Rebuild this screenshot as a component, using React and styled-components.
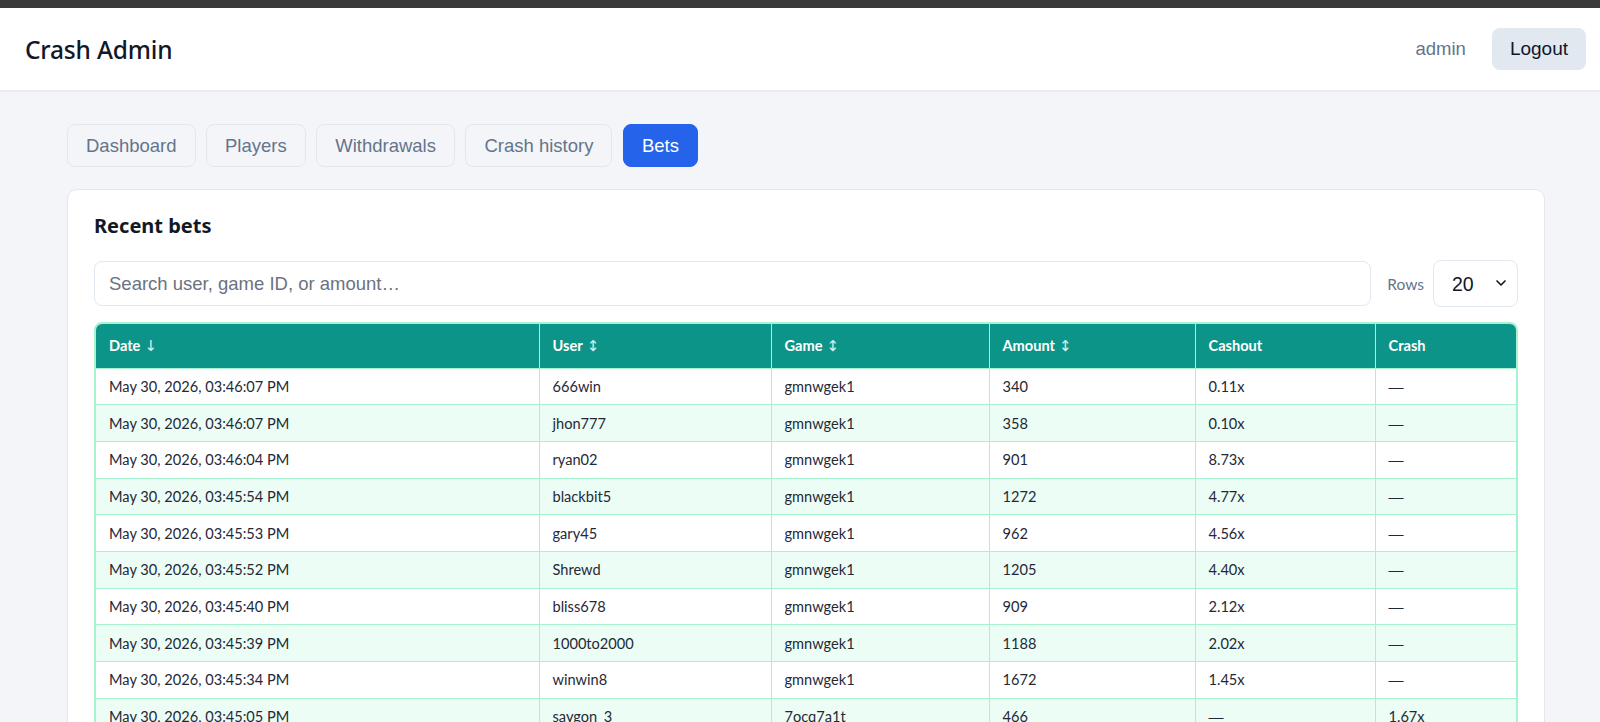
import React from 'react';
import styled, { createGlobalStyle } from 'styled-components';
import { ChevronDown } from 'lucide-react';

const GlobalStyle = createGlobalStyle`
  html, body {
    margin: 0;
    padding: 0;
    background: #f4f5f9;
    font-family: "Lato", "Liberation Sans", sans-serif;
    color: #0f172a;
  }
  * { box-sizing: border-box; }
`;

const TopStrip = styled.div`
  height: 8px;
  background: #3a3a3a;
`;

const Header = styled.header`
  height: 84px;
  background: #fff;
  display: flex;
  align-items: center;
  justify-content: space-between;
  padding: 0 14px 0 25px;
  border-bottom: 2px solid #e8ebf1;
`;

const Brand = styled.h1`
  margin: 0;
  font-family: "Noto Sans", "Open Sans", sans-serif;
  font-size: 24.5px;
  font-weight: 500;
  color: #111827;
  letter-spacing: -0.2px;
`;

const UserBox = styled.div`
  display: flex;
  align-items: center;
  gap: 26px;
`;

const UserName = styled.span`
  font-family: "Liberation Sans", Arial, sans-serif;
  font-size: 18.5px;
  color: #64748b;
`;

const LogoutButton = styled.button`
  height: 42px;
  padding: 0 18px;
  border: none;
  border-radius: 8px;
  background: #e2e8f0;
  color: #0f172a;
  font-family: "Liberation Sans", Arial, sans-serif;
  font-size: 19px;
`;

const Main = styled.main`
  width: 1478px;
  margin-left: 67px;
  padding-top: 32px;
`;

const Tabs = styled.nav`
  display: flex;
  gap: 10.5px;
  margin-bottom: 22px;
`;

const Tab = styled.button`
  height: 43px;
  padding: 0 18px;
  border-radius: 8px;
  border: 1px solid ${p => (p.$active ? '#2563eb' : '#e5e7eb')};
  background: ${p => (p.$active ? '#2563eb' : '#f4f5f9')};
  color: ${p => (p.$active ? '#fff' : '#64748b')};
  font-family: "Liberation Sans", Arial, sans-serif;
  font-size: 18.5px;
`;

const Card = styled.section`
  background: #fff;
  border: 1px solid #e5e7eb;
  border-radius: 10px;
  padding: 22px 26px 40px 26px;
`;

const CardTitle = styled.h2`
  margin: 0 0 20px 0;
  font-family: "Noto Sans", "Open Sans", sans-serif;
  font-size: 20px;
  font-weight: 700;
  color: #111827;
  line-height: 28px;
`;

const Controls = styled.div`
  display: flex;
  align-items: center;
  gap: 16px;
  margin-bottom: 15px;
`;

const Search = styled.input`
  flex: 1;
  height: 45px;
  padding: 0 14px;
  border: 1px solid #e2e8f0;
  border-radius: 8px;
  font-family: "Liberation Sans", Arial, sans-serif;
  font-size: 18.5px;
  color: #0f172a;
  outline: none;
  &::placeholder { color: #6b7280; }
`;

const RowsLabel = styled.label`
  display: flex;
  align-items: center;
  gap: 9px;
  font-family: "Lato", sans-serif;
  font-size: 15.5px;
  color: #64748b;
`;

const SelectWrap = styled.div`
  position: relative;
  width: 85px;
  height: 47px;
  svg {
    position: absolute;
    right: 9px;
    top: 15px;
    pointer-events: none;
    color: #111827;
  }
`;

const Select = styled.select`
  appearance: none;
  width: 100%;
  height: 100%;
  padding-left: 18px;
  border: 1px solid #e2e8f0;
  border-radius: 8px;
  background: #fff;
  font-family: "Liberation Sans", Arial, sans-serif;
  font-size: 19.5px;
  color: #0f172a;
`;

const TableFrame = styled.div`
  border: 2px solid #a7f3d0;
  border-radius: 8px;
  overflow: hidden;
`;

const Table = styled.table`
  width: 100%;
  border-collapse: collapse;
  table-layout: fixed;
  font-size: 14.6px;
`;

const Th = styled.th`
  height: 44px;
  padding: 0 13px;
  text-align: left;
  background: #0d9488;
  color: #fff;
  font-weight: 700;
  border-left: 1px solid #a7f3d0;
  &:first-child { border-left: none; }
`;

const SortMark = styled.span`
  font-family: "DejaVu Sans", sans-serif;
  font-weight: 400;
  font-size: 15px;
  opacity: 0.85;
  margin-left: 4px;
`;

const Tr = styled.tr`
  background: ${p => (p.$alt ? '#ecfdf5' : '#fff')};
`;

const Td = styled.td`
  height: 36.7px;
  padding: 0 13px;
  color: #1f2937;
  border-top: 1px solid #a7f3d0;
  border-left: 1px solid #a7f3d0;
  &:first-child { border-left: none; }
`;

const Dash = styled.span`
  font-family: "Liberation Sans", Arial, sans-serif;
  font-size: 15px;
  color: #1f2937;
`;

const columns = [
  { label: 'Date', sort: '↓', width: 443 },
  { label: 'User', sort: '↕', width: 232 },
  { label: 'Game', sort: '↕', width: 218 },
  { label: 'Amount', sort: '↕', width: 206 },
  { label: 'Cashout', width: 180 },
  { label: 'Crash', width: 141 },
];

const bets = [
  ['03:46:07', '666win', 'gmnwgek1', '340', '0.11x', null],
  ['03:46:07', 'jhon777', 'gmnwgek1', '358', '0.10x', null],
  ['03:46:04', 'ryan02', 'gmnwgek1', '901', '8.73x', null],
  ['03:45:54', 'blackbit5', 'gmnwgek1', '1272', '4.77x', null],
  ['03:45:53', 'gary45', 'gmnwgek1', '962', '4.56x', null],
  ['03:45:52', 'Shrewd', 'gmnwgek1', '1205', '4.40x', null],
  ['03:45:40', 'bliss678', 'gmnwgek1', '909', '2.12x', null],
  ['03:45:39', '1000to2000', 'gmnwgek1', '1188', '2.02x', null],
  ['03:45:34', 'winwin8', 'gmnwgek1', '1672', '1.45x', null],
  ['03:45:05', 'saygon_3', '7ocq7a1t', '466', null, '1.67x'],
  ['03:45:02', 'luckyjoe', '7ocq7a1t', '250', null, '1.67x'],
  ['03:44:58', 'maxbet', '7ocq7a1t', '1000', '1.20x', '1.67x'],
];

const tabs = ['Dashboard', 'Players', 'Withdrawals', 'Crash history', 'Bets'];

const orDash = v => (v === null ? <Dash>—</Dash> : v);

export default function App() {
  return (
    <>
      <GlobalStyle />
      <TopStrip />
      <Header>
        <Brand>Crash Admin</Brand>
        <UserBox>
          <UserName>admin</UserName>
          <LogoutButton>Logout</LogoutButton>
        </UserBox>
      </Header>
      <Main>
        <Tabs>
          {tabs.map(t => (
            <Tab key={t} $active={t === 'Bets'}>{t}</Tab>
          ))}
        </Tabs>
        <Card>
          <CardTitle>Recent bets</CardTitle>
          <Controls>
            <Search placeholder="Search user, game ID, or amount…" />
            <RowsLabel>
              Rows
              <SelectWrap>
                <Select defaultValue="20">
                  <option>10</option>
                  <option>20</option>
                  <option>50</option>
                </Select>
                <ChevronDown size={16} strokeWidth={2.5} />
              </SelectWrap>
            </RowsLabel>
          </Controls>
          <TableFrame>
            <Table>
              <colgroup>
                {columns.map(c => <col key={c.label} style={{ width: c.width }} />)}
              </colgroup>
              <thead>
                <tr>
                  {columns.map(c => (
                    <Th key={c.label}>
                      {c.label}
                      {c.sort && <SortMark>{c.sort}</SortMark>}
                    </Th>
                  ))}
                </tr>
              </thead>
              <tbody>
                {bets.map((b, i) => (
                  <Tr key={i} $alt={i % 2 === 1}>
                    <Td>May 30, 2026, {b[0]} PM</Td>
                    <Td>{b[1]}</Td>
                    <Td>{b[2]}</Td>
                    <Td>{b[3]}</Td>
                    <Td>{orDash(b[4])}</Td>
                    <Td>{orDash(b[5])}</Td>
                  </Tr>
                ))}
              </tbody>
            </Table>
          </TableFrame>
        </Card>
      </Main>
    </>
  );
}
